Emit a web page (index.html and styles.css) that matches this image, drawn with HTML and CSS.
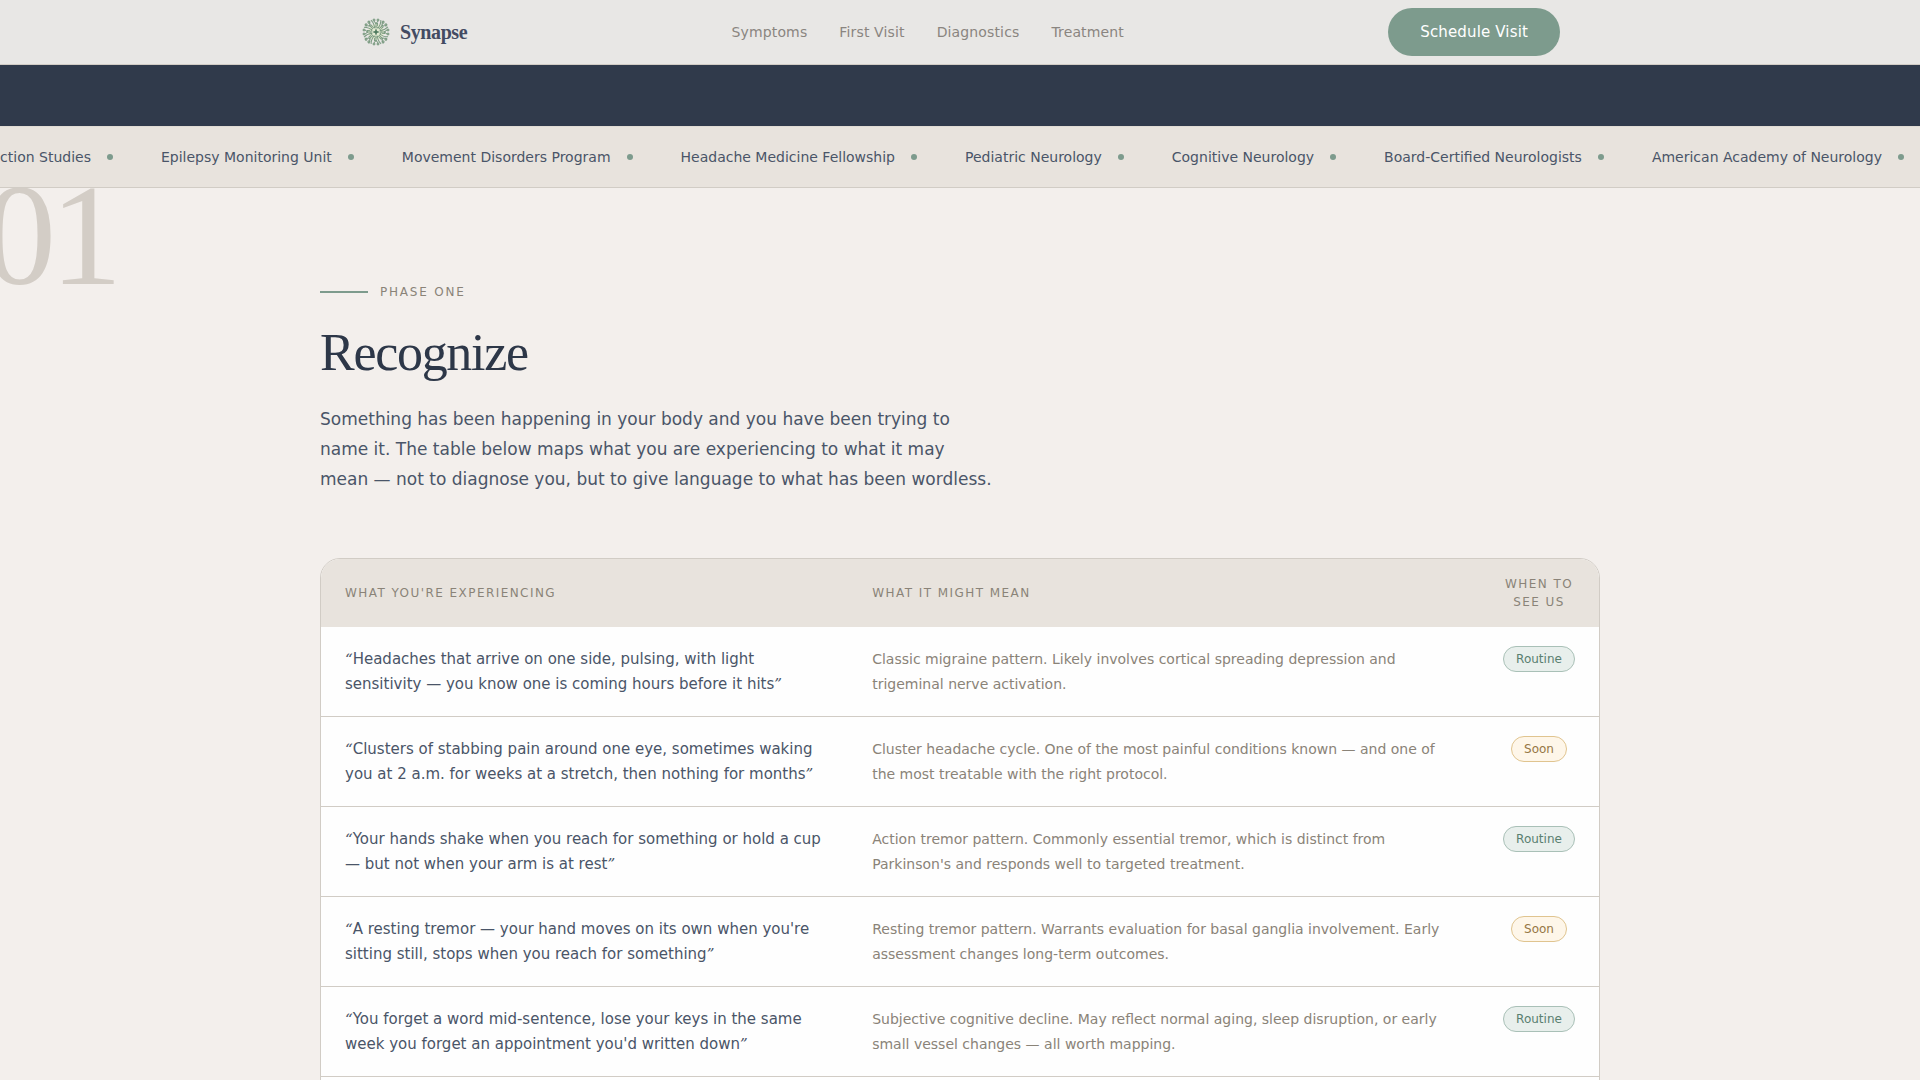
FILE: index.html
```html
<!DOCTYPE html>
<html lang="en">
<head>
    <meta charset="UTF-8">
    <meta name="viewport" content="width=device-width, initial-scale=1.0">
    <title>Synapse</title>
    <link rel="stylesheet" href="styles.css">
</head>
<body>

    <!-- Navigation -->
    <header class="site-header">
        <div class="header-inner">
            <a href="#" class="brand">
                <svg class="brand-icon" viewBox="-16 -16 32 32" aria-hidden="true">
                    <defs>
                        <g id="branch">
                            <path d="M0 -5V-10M0 -8L-2 -11V-13M0 -8L2 -11V-13"/>
                            <circle cx="-2" cy="-12" r="1"/>
                            <circle cx="2" cy="-12" r="1"/>
                        </g>
                        <g id="spur">
                            <path d="M0 -4Q2 -8 0 -13"/>
                            <path d="M-1 -6L-2 -9"/>
                        </g>
                    </defs>
                    <circle class="brand-glow" r="8"/>
                    <g class="brand-lines">
                        <use href="#branch"/>
                        <use href="#branch" transform="rotate(45)"/>
                        <use href="#branch" transform="rotate(90)"/>
                        <use href="#branch" transform="rotate(135)"/>
                        <use href="#branch" transform="rotate(180)"/>
                        <use href="#branch" transform="rotate(225)"/>
                        <use href="#branch" transform="rotate(270)"/>
                        <use href="#branch" transform="rotate(315)"/>
                        <use href="#spur" transform="rotate(22)"/>
                        <use href="#spur" transform="rotate(67)"/>
                        <use href="#spur" transform="rotate(112)"/>
                        <use href="#spur" transform="rotate(157)"/>
                        <use href="#spur" transform="rotate(202)"/>
                        <use href="#spur" transform="rotate(247)"/>
                        <use href="#spur" transform="rotate(292)"/>
                        <use href="#spur" transform="rotate(337)"/>
                        <circle r="5"/>
                    </g>
                    <path class="brand-core" d="M0 -4L1 -1L4 0L1 1L0 4L-1 1L-4 0L-1 -1Z"/>
                </svg>
                <span>Synapse</span>
            </a>
            <nav class="main-nav">
                <a href="#symptoms">Symptoms</a>
                <a href="#visit">First Visit</a>
                <a href="#diagnostics">Diagnostics</a>
                <a href="#treatment">Treatment</a>
            </nav>
            <button type="button" class="button">Schedule Visit</button>
        </div>
    </header>

    <div class="hero-edge"></div>

    <!-- Credentials ticker -->
    <div class="ticker">
        <ul class="ticker-track">
            <li>Nerve Conduction Studies</li>
            <li>Epilepsy Monitoring Unit</li>
            <li>Movement Disorders Program</li>
            <li>Headache Medicine Fellowship</li>
            <li>Pediatric Neurology</li>
            <li>Cognitive Neurology</li>
            <li>Board-Certified Neurologists</li>
            <li>American Academy of Neurology</li>
        </ul>
    </div>

    <!-- Phase one -->
    <section class="phase" id="symptoms">
        <span class="phase-number" aria-hidden="true">01</span>
        <div class="container">
            <p class="eyebrow">Phase One</p>
            <h2>Recognize</h2>
            <p class="intro">Something has been happening in your body and you have been trying to name it. The table below maps what you are experiencing to what it may mean — not to diagnose you, but to give language to what has been wordless.</p>

            <div class="table-card">
                <table class="symptoms">
                    <thead>
                        <tr>
                            <th class="col-feel" scope="col">What you're experiencing</th>
                            <th scope="col">What it might mean</th>
                            <th class="col-when" scope="col">When to see us</th>
                        </tr>
                    </thead>
                    <tbody>
                        <tr>
                            <td class="feel">Headaches that arrive on one side, pulsing, with light sensitivity — you know one is coming hours before it hits</td>
                            <td class="meaning">Classic migraine pattern. Likely involves cortical spreading depression and trigeminal nerve activation.</td>
                            <td class="when"><span class="badge routine">Routine</span></td>
                        </tr>
                        <tr>
                            <td class="feel">Clusters of stabbing pain around one eye, sometimes waking you at 2 a.m. for weeks at a stretch, then nothing for months</td>
                            <td class="meaning">Cluster headache cycle. One of the most painful conditions known — and one of the most treatable with the right protocol.</td>
                            <td class="when"><span class="badge soon">Soon</span></td>
                        </tr>
                        <tr>
                            <td class="feel">Your hands shake when you reach for something or hold a cup — but not when your arm is at rest</td>
                            <td class="meaning">Action tremor pattern. Commonly essential tremor, which is distinct from Parkinson's and responds well to targeted treatment.</td>
                            <td class="when"><span class="badge routine">Routine</span></td>
                        </tr>
                        <tr>
                            <td class="feel">A resting tremor — your hand moves on its own when you're sitting still, stops when you reach for something</td>
                            <td class="meaning">Resting tremor pattern. Warrants evaluation for basal ganglia involvement. Early assessment changes long-term outcomes.</td>
                            <td class="when"><span class="badge soon">Soon</span></td>
                        </tr>
                        <tr>
                            <td class="feel">You forget a word mid-sentence, lose your keys in the same week you forget an appointment you'd written down</td>
                            <td class="meaning">Subjective cognitive decline. May reflect normal aging, sleep disruption, or early small vessel changes — all worth mapping.</td>
                            <td class="when"><span class="badge routine">Routine</span></td>
                        </tr>
                    </tbody>
                </table>
            </div>
        </div>
    </section>

</body>
</html>
```
FILE: styles.css
```css
* {
    box-sizing: border-box;
}
body {
    font-family: "DejaVu Sans", sans-serif;
    margin: 0;
    height: 100vh;
    overflow: hidden;
    color: #4a5568;
    background-color: #f3efec;
}

/* Header */
.site-header {
    background-color: #e8e7e5;
    border-bottom: 1px solid #d1ccc5;
}
.header-inner {
    display: flex;
    justify-content: space-between;
    align-items: center;
    max-width: 1280px;
    height: 64px;
    margin: 0 auto;
    padding: 0 40px;
}
.brand {
    display: flex;
    align-items: center;
    gap: 8px;
    font-family: "Liberation Serif", serif;
    font-size: 20px;
    font-weight: bold;
    letter-spacing: -0.02em;
    color: #434b62;
    text-decoration: none;
}
.brand-icon {
    width: 32px;
    height: 32px;
}
.brand-glow {
    fill: #e3ead2;
}
.brand-lines {
    fill: none;
    stroke: #7a9a80;
    stroke-width: 1;
}
.brand-core {
    fill: #4f7a5e;
}
.main-nav {
    display: flex;
    gap: 32px;
}
.main-nav a {
    font-size: 14px;
    letter-spacing: 0.01em;
    color: #8a8580;
    text-decoration: none;
}
.button {
    height: 48px;
    padding: 0 32px;
    font-family: inherit;
    font-size: 15px;
    letter-spacing: 0.01em;
    color: #ffffff;
    background-color: #7d9b8d;
    border: none;
    border-radius: 24px;
    cursor: pointer;
}
.hero-edge {
    height: 61px;
    background-color: #303a4b;
}

/* Ticker */
.ticker {
    overflow: hidden;
    background-color: #e8e3dd;
    border-top: 1px solid #e0dbd4;
    border-bottom: 1px solid #d1ccc5;
}
.ticker-track {
    display: flex;
    justify-content: flex-end;
    gap: 48px;
    margin: 0;
    padding: 20px 16px;
    list-style: none;
}
.ticker-track li {
    display: flex;
    align-items: center;
    gap: 16px;
    font-size: 14px;
    line-height: 20px;
    white-space: nowrap;
}
.ticker-track li::after {
    content: "";
    width: 6px;
    height: 6px;
    border-radius: 50%;
    background-color: #7d9b8d;
}

/* Phase section */
.phase {
    position: relative;
    padding: 96px 40px;
    overflow: hidden;
}
.phase-number {
    position: absolute;
    top: -24px;
    left: -16px;
    font-family: "Liberation Serif", serif;
    font-size: 144px;
    line-height: 1;
    letter-spacing: -0.04em;
    color: #d3cdc6;
}
.container {
    position: relative;
    max-width: 1280px;
    margin: 0 auto;
}
.eyebrow {
    display: flex;
    align-items: center;
    gap: 12px;
    margin: 0 0 24px;
    font-size: 12px;
    line-height: 16px;
    letter-spacing: 0.15em;
    text-transform: uppercase;
    color: #8a8378;
}
.eyebrow::before {
    content: "";
    width: 48px;
    height: 2px;
    background-color: #7d9b8d;
}
h2 {
    margin: 0 0 22px;
    font-family: "Liberation Serif", serif;
    font-size: 52px;
    font-weight: normal;
    line-height: 58px;
    letter-spacing: -0.025em;
    color: #2d3748;
}
.intro {
    max-width: 672px;
    margin: 0 0 64px;
    font-size: 17px;
    line-height: 30px;
}

/* Symptom table */
.table-card {
    padding-bottom: 24px;
    overflow: hidden;
    background-color: #fefefe;
    border: 1px solid #d1ccc5;
    border-radius: 20px;
}
.symptoms {
    width: 100%;
    table-layout: fixed;
    border-collapse: separate;
    border-spacing: 0;
}
.symptoms th {
    padding: 16px 24px;
    font-size: 12px;
    font-weight: normal;
    line-height: 18px;
    letter-spacing: 0.12em;
    text-align: left;
    text-transform: uppercase;
    color: #8a8378;
    background-color: #e8e3dd;
}
.symptoms .col-feel {
    width: 41.25%;
}
.symptoms .col-when {
    width: 120px;
    text-align: center;
}
.symptoms td {
    padding: 20px 24px 19px;
    line-height: 25px;
    vertical-align: top;
    border-bottom: 1px solid #d1ccc5;
}
.feel {
    font-size: 15px;
}
.feel::before,
.feel::after {
    font-family: "DejaVu Serif", serif;
    font-style: italic;
    line-height: 1;
}
.feel::before {
    content: "“";
}
.feel::after {
    content: "”";
}
.meaning {
    font-size: 14px;
    color: #8a8378;
}
.symptoms .when {
    padding: 18px 0;
    text-align: center;
}
.badge {
    display: inline-block;
    padding: 0 12px;
    font-size: 12px;
    line-height: 24px;
    border: 1px solid;
    border-radius: 13px;
}
.routine {
    color: #5a8070;
    background-color: #e8efec;
    border-color: #a9c0b7;
}
.soon {
    color: #967645;
    background-color: #fef6e9;
    border-color: #e0c48f;
}
```
